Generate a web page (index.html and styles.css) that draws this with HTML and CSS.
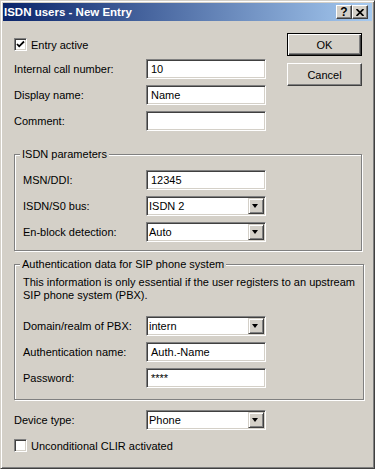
FILE: index.html
```html
<!DOCTYPE html>
<html lang="en">
  <head>
    <meta charset="UTF-8" />
    <title>ISDN users - New Entry</title>
    <link rel="stylesheet" href="styles.css">
  </head>
  <body>
    <div class="window">
      <div class="titlebar">
        <span class="title">ISDN users - New Entry</span>
        <div class="title-buttons">
          <span class="tbtn help">?</span>
          <span class="tbtn close">
            <svg width="8" height="7" viewBox="0 0 8 7"><path d="M0.5 0 L7.5 7 M7.5 0 L0.5 7" stroke="#000" stroke-width="1.7" fill="none" /></svg>
          </span>
        </div>
      </div>

      <div class="content">
        <div class="top">
          <div class="top-fields">
            <div class="check-row">
              <span class="box">
                <svg width="9" height="9" viewBox="0 0 9 9"><path d="M1 4 L3.2 6.3 L8 1.5" stroke="#000" stroke-width="1.8" fill="none" /></svg>
              </span>
              <span>Entry active</span>
            </div>
            <div class="row">
              <span class="label">Internal call number:</span>
              <span class="field">10</span>
            </div>
            <div class="row">
              <span class="label">Display name:</span>
              <span class="field">Name</span>
            </div>
            <div class="row">
              <span class="label">Comment:</span>
              <span class="field"></span>
            </div>
          </div>
          <div class="buttons">
            <button class="btn default">OK</button>
            <button class="btn">Cancel</button>
          </div>
        </div>

        <!-- ISDN parameters -->
        <fieldset class="group isdn">
          <legend>ISDN parameters</legend>
          <div class="row">
            <span class="label">MSN/DDI:</span>
            <span class="field">12345</span>
          </div>
          <div class="row">
            <span class="label">ISDN/S0 bus:</span>
            <span class="field select"><span>ISDN 2</span><span class="arrow"></span></span>
          </div>
          <div class="row">
            <span class="label">En-block detection:</span>
            <span class="field select"><span>Auto</span><span class="arrow"></span></span>
          </div>
        </fieldset>

        <!-- SIP authentication -->
        <fieldset class="group auth">
          <legend>Authentication data for SIP phone system</legend>
          <p class="info">This information is only essential if the user registers to an upstream<br>SIP phone system (PBX).</p>
          <div class="row">
            <span class="label">Domain/realm of PBX:</span>
            <span class="field select"><span>intern</span><span class="arrow"></span></span>
          </div>
          <div class="row">
            <span class="label">Authentication name:</span>
            <span class="field">Auth.-Name</span>
          </div>
          <div class="row">
            <span class="label">Password:</span>
            <span class="field">****</span>
          </div>
        </fieldset>

        <div class="row device">
          <span class="label">Device type:</span>
          <span class="field select"><span>Phone</span><span class="arrow"></span></span>
        </div>
        <div class="check-row clir">
          <span class="box"></span>
          <span>Unconditional CLIR activated</span>
        </div>
      </div>
    </div>
  </body>
</html>
```

FILE: styles.css
```css
/* General styling */
body {
  margin: 0;
  background-color: #d4d0c8;
}

.window {
  width: 375px;
  height: 469px;
  box-sizing: border-box;
  padding: 2px;
  border: 1px solid;
  border-color: #d4d0c8 #404040 #404040 #d4d0c8;
  box-shadow: inset 1px 1px 0 #fff, inset -1px -1px 0 #808080;
  background-color: #d4d0c8;
  font-family: "Liberation Sans", Arial, sans-serif;
  font-size: 11px;
  color: #000;
}

/* Title bar */
.titlebar {
  height: 18px;
  display: flex;
  align-items: center;
  justify-content: space-between;
  padding: 0 4px 0 1px;
  background: linear-gradient(to right, #0a246a, #a6caf0);
  color: #fff;
  font-weight: bold;
  font-size: 11.5px;
}

.title-buttons {
  display: flex;
}

.tbtn {
  width: 16px;
  height: 14px;
  box-sizing: border-box;
  display: flex;
  align-items: center;
  justify-content: center;
  background-color: #d4d0c8;
  border: 1px solid;
  border-color: #fff #404040 #404040 #fff;
  box-shadow: inset -1px -1px 0 #808080;
  color: #000;
  font-size: 12px;
  font-weight: bold;
  line-height: 12px;
}

/* Content */
.content {
  padding: 0 10px 0 11px;
}

.top {
  display: flex;
  justify-content: space-between;
  align-items: flex-start;
}

.top-fields {
  margin-top: 17px;
  display: flex;
  flex-direction: column;
  gap: 6px;
}

.top-fields .check-row {
  margin-bottom: 2px;
}

.buttons {
  margin-top: 12px;
  display: flex;
  flex-direction: column;
  gap: 7px;
}

.btn {
  width: 75px;
  height: 23px;
  box-sizing: border-box;
  padding: 0;
  background-color: #d4d0c8;
  border: 1px solid;
  border-color: #fff #404040 #404040 #fff;
  box-shadow: inset -1px -1px 0 #808080;
  font-family: inherit;
  font-size: 11px;
  color: #000;
}

.btn.default {
  border-color: #000;
  box-shadow: inset 1px 1px 0 #fff, inset -1px -1px 0 #404040, inset -2px -2px 0 #808080;
}

/* Rows */
.row {
  display: flex;
  align-items: center;
  height: 20px;
}

.label {
  width: 132px;
  white-space: nowrap;
}

.group .label {
  width: 123px;
}

.field {
  width: 120px;
  height: 20px;
  box-sizing: border-box;
  padding: 0 4px;
  background-color: #fff;
  border: 1px solid;
  border-color: #808080 #fff #fff #808080;
  box-shadow: inset 1px 1px 0 #404040, inset -1px -1px 0 #d4d0c8;
  line-height: 18px;
  white-space: nowrap;
}

.field.select {
  display: flex;
  justify-content: space-between;
  padding: 0 0 0 2px;
}

.arrow {
  width: 16px;
  height: 16px;
  margin: 1px;
  box-sizing: border-box;
  position: relative;
  background-color: #d4d0c8;
  border: 1px solid;
  border-color: #d4d0c8 #404040 #404040 #d4d0c8;
  box-shadow: inset 1px 1px 0 #fff, inset -1px -1px 0 #808080;
}

.arrow::after {
  content: "";
  position: absolute;
  left: 3px;
  top: 5px;
  border-style: solid;
  border-width: 4px 3.5px 0 3.5px;
  border-color: #000 transparent transparent transparent;
}

/* Checkboxes */
.check-row {
  display: flex;
  align-items: center;
  height: 13px;
  gap: 4px;
}

.box {
  width: 13px;
  height: 13px;
  box-sizing: border-box;
  display: flex;
  align-items: center;
  justify-content: center;
  background-color: #fff;
  border: 1px solid;
  border-color: #808080 #fff #fff #808080;
  box-shadow: inset 1px 1px 0 #404040, inset -1px -1px 0 #d4d0c8;
}

/* Group boxes */
.group {
  margin: 0;
  padding: 9px 8px 8px;
  border: 1px solid #808080;
  box-shadow: inset 1px 1px 0 #fff, 1px 1px 0 #fff;
  display: flex;
  flex-direction: column;
  gap: 6px;
}

.group legend {
  margin-left: -3px;
  padding: 0 2px;
  line-height: 13px;
  background-color: #d4d0c8;
}

.isdn {
  margin-top: 17px;
}

.auth {
  margin-top: 7px;
  padding-top: 5px;
  padding-bottom: 11px;
}

.info {
  margin: 0 0 8px;
  line-height: 13px;
  white-space: nowrap;
}

.device {
  margin-top: 10px;
}

.clir {
  margin-top: 9px;
}
```
